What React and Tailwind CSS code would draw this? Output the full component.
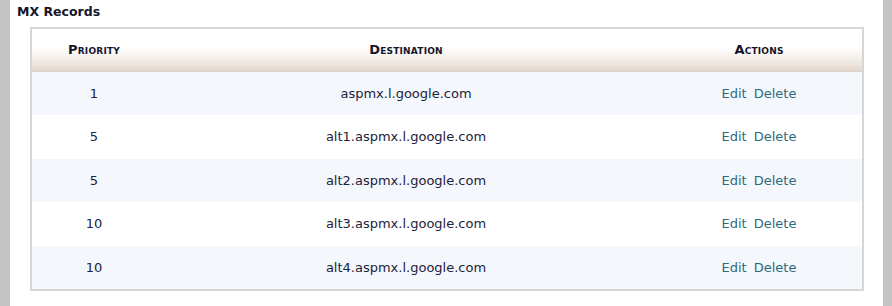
import React from "react";

const rows = [
  ["1", "aspmx.l.google.com"],
  ["5", "alt1.aspmx.l.google.com"],
  ["5", "alt2.aspmx.l.google.com"],
  ["10", "alt3.aspmx.l.google.com"],
  ["10", "alt4.aspmx.l.google.com"],
];

function Head({ children }) {
  return (
    <div className="font-bold text-[13px] text-[#15152a] [font-variant:small-caps] tracking-[0.2px]">
      {children}
    </div>
  );
}

export default function App() {
  return (
    <div className="flex w-[892px] h-[306px] bg-white" style={{ fontFamily: '"DejaVu Sans", Verdana, sans-serif' }}>
      <div className="w-[10px] bg-[#c4c4c4]" />
      <div className="flex-1 flex flex-col">
        <div className="h-[27px] pl-[7px] pt-[3px] text-[12.5px] font-bold text-[#15152a] leading-[17px]">MX Records</div>
        <div className="ml-[20px] mr-[19px] border-2 border-[#d6d6d6]">
          <div className="grid grid-cols-[124px_500px_1fr] h-[43px] items-center bg-[linear-gradient(to_bottom,#ffffff_0%,#ffffff_45%,#f1ebe6_75%,#e3d6cd_100%)] border-b border-[#ddd0c6]">
            <div className="text-center"><Head>Priority</Head></div>
            <div className="text-center"><Head>Destination</Head></div>
            <div className="text-center"><Head>Actions</Head></div>
          </div>
          {rows.map((r, i) => (
            <div
              key={i}
              className={`grid grid-cols-[124px_500px_1fr] h-[43.4px] items-center text-[13px] text-[#22223a] ${i % 2 === 0 ? "bg-[#f4f7fc]" : "bg-white"}`}
            >
              <div className="text-center">{r[0]}</div>
              <div className="text-center">{r[1]}</div>
              <div className="text-center text-[#2f6a7c]">
                <span>Edit</span>
                <span className="ml-[7px]">Delete</span>
              </div>
            </div>
          ))}
        </div>
      </div>
      <div className="w-[9px] bg-[#c4c4c4]" />
    </div>
  );
}
